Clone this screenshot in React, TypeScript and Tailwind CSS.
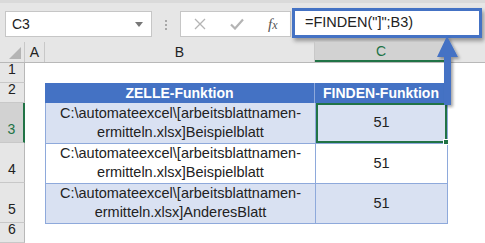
import React from 'react'

const font = { fontFamily: '"Liberation Sans", Arial, sans-serif' }

const rows = [
  { n: 3, line2: 'ermitteln.xlsx]Beispielblatt', value: 51, fill: 'bg-[#d9e1f2]' },
  { n: 4, line2: 'ermitteln.xlsx]Beispielblatt', value: 51, fill: 'bg-white' },
  { n: 5, line2: 'ermitteln.xlsx]AnderesBlatt', value: 51, fill: 'bg-[#d9e1f2]' },
]

function RowHead({ n, h, selected }: { n: number; h: string; selected?: boolean }) {
  return (
    <div
      className={
        'flex items-end justify-center border-b border-[#c8c8c8] pb-[2px] text-[14px] ' +
        h +
        (selected
          ? ' bg-[#d2d2d2] text-[#217346] border-r-2 border-r-[#217346]'
          : ' bg-[#e6e6e6] text-[#222] border-r border-r-[#b8b8b8]')
      }
    >
      {n}
    </div>
  )
}

export default function App() {
  return (
    <div className="relative w-[485px] h-[243px] overflow-hidden bg-white" style={font}>
      {/* Toolbar */}
      <div className="flex items-start h-[42px] bg-[#e6e6e6] pt-[8px] pl-[5px] border-t-[3px] border-t-[#dadada]">
        <div className="flex items-center justify-between w-[147px] h-[26px] bg-white border border-[#c6c6c6] pl-[6px] pr-[8px] text-[14px] text-[#222]">
          <span>C3</span>
          <span className="w-0 h-0 border-l-[4px] border-r-[4px] border-t-[5px] border-l-transparent border-r-transparent border-t-[#777]" />
        </div>
        <div className="flex flex-col gap-[2px] mx-[13px] mt-[9px]">
          <span className="w-[2px] h-[2px] bg-[#a8a8a8]" />
          <span className="w-[2px] h-[2px] bg-[#a8a8a8]" />
          <span className="w-[2px] h-[2px] bg-[#a8a8a8]" />
        </div>
        <div className="flex items-center w-[111px] h-[26px] bg-white border border-[#c6c6c6]">
          <svg width="12" height="12" viewBox="0 0 12 12" className="ml-[13px]">
            <path d="M1 1L11 11M11 1L1 11" stroke="#b4b4b4" strokeWidth="1.3" />
          </svg>
          <svg width="14" height="12" viewBox="0 0 14 12" className="ml-[24px]">
            <path d="M1 6.5L5 10.5L13 1.5" stroke="#b4b4b4" strokeWidth="2.2" fill="none" />
          </svg>
          <span
            className="ml-[24px] text-[15px] italic text-[#555]"
            style={{ fontFamily: '"Liberation Serif", serif' }}
          >
            f<span className="text-[12px]">x</span>
          </span>
        </div>
        <div className="ml-[1px] -mt-[3px] w-[190px] h-[30px] bg-white border-[3px] border-[#4472c4] shadow-[2px_3px_4px_rgba(0,0,0,0.35)] flex items-center pl-[10px] text-[14.5px] text-[#222]">
          =FINDEN("]";B3)
        </div>
      </div>

      {/* Column headers */}
      <div className="flex h-[21px] bg-[#e6e6e6] border-b border-[#b8b8b8] text-[14px] text-[#222]">
        <div className="relative w-[25px] border-r border-[#c8c8c8]">
          <span
            className="absolute right-[3px] bottom-[3px] w-0 h-0"
            style={{ borderBottom: '12px solid #b4b4b4', borderLeft: '12px solid transparent' }}
          />
        </div>
        <div className="flex items-center justify-center w-[20px] border-r border-[#c8c8c8]">A</div>
        <div className="flex items-center justify-center w-[270px] border-r border-[#c8c8c8]">B</div>
        <div className="flex items-center justify-center w-[132px] bg-[#d2d2d2] border-b-2 border-[#217346] text-[#217346]">C</div>
        <div className="flex-1 border-l border-[#c8c8c8]" />
      </div>

      {/* Sheet */}
      <div className="flex">
        <div className="flex flex-col w-[25px]">
          <RowHead n={1} h="h-[20px]" />
          <RowHead n={2} h="h-[20px]" />
          {rows.map((r) => (
            <RowHead key={r.n} n={r.n} h="h-[40px]" selected={r.n === 3} />
          ))}
          <RowHead n={6} h="h-[20px]" />
        </div>
        <div className="flex flex-col pl-[20px] pt-[20px]">
          <div className="flex h-[20px] bg-[#4472c4] text-white font-bold text-[14px]">
            <div className="flex items-center justify-center w-[270px] border-r border-[#8ea9db]">ZELLE-Funktion</div>
            <div className="flex items-center justify-center w-[132px]">FINDEN-Funktion</div>
          </div>
          <div className="border-l border-r border-b border-[#8ea9db] w-[403px]">
            {rows.map((r, i) => (
              <div key={r.n} className={'flex h-[40px] text-[14.5px] text-[#222] ' + r.fill + (i > 0 ? ' border-t border-[#8ea9db]' : '')}>
                <div className="flex flex-col items-center justify-end w-[270px] border-r border-[#8ea9db] leading-[19px] pb-[1px]">
                  <span>C:\automateexcel\[arbeitsblattnamen-</span>
                  <span>{r.line2}</span>
                </div>
                <div
                  className={
                    'relative flex items-center justify-center flex-1 ' +
                    (r.n === 3 ? 'border-2 border-[#217346]' : '')
                  }
                >
                  {r.value}
                  {r.n === 3 && (
                    <span className="absolute -right-[4px] -bottom-[4px] w-[6px] h-[6px] bg-[#217346] border border-white" />
                  )}
                </div>
              </div>
            ))}
          </div>
        </div>
      </div>

      {/* Arrow */}
      <svg className="absolute left-[434px] top-[34px]" width="30" height="75" viewBox="0 0 30 75">
        <defs>
          <filter id="sh" x="-50%" y="-20%" width="200%" height="150%">
            <feDropShadow dx="2" dy="2" stdDeviation="1.5" floodColor="#000" floodOpacity="0.35" />
          </filter>
        </defs>
        <path d="M13 2L24 23H17V71H10V23H3Z" fill="#4472c4" filter="url(#sh)" />
      </svg>
    </div>
  )
}
